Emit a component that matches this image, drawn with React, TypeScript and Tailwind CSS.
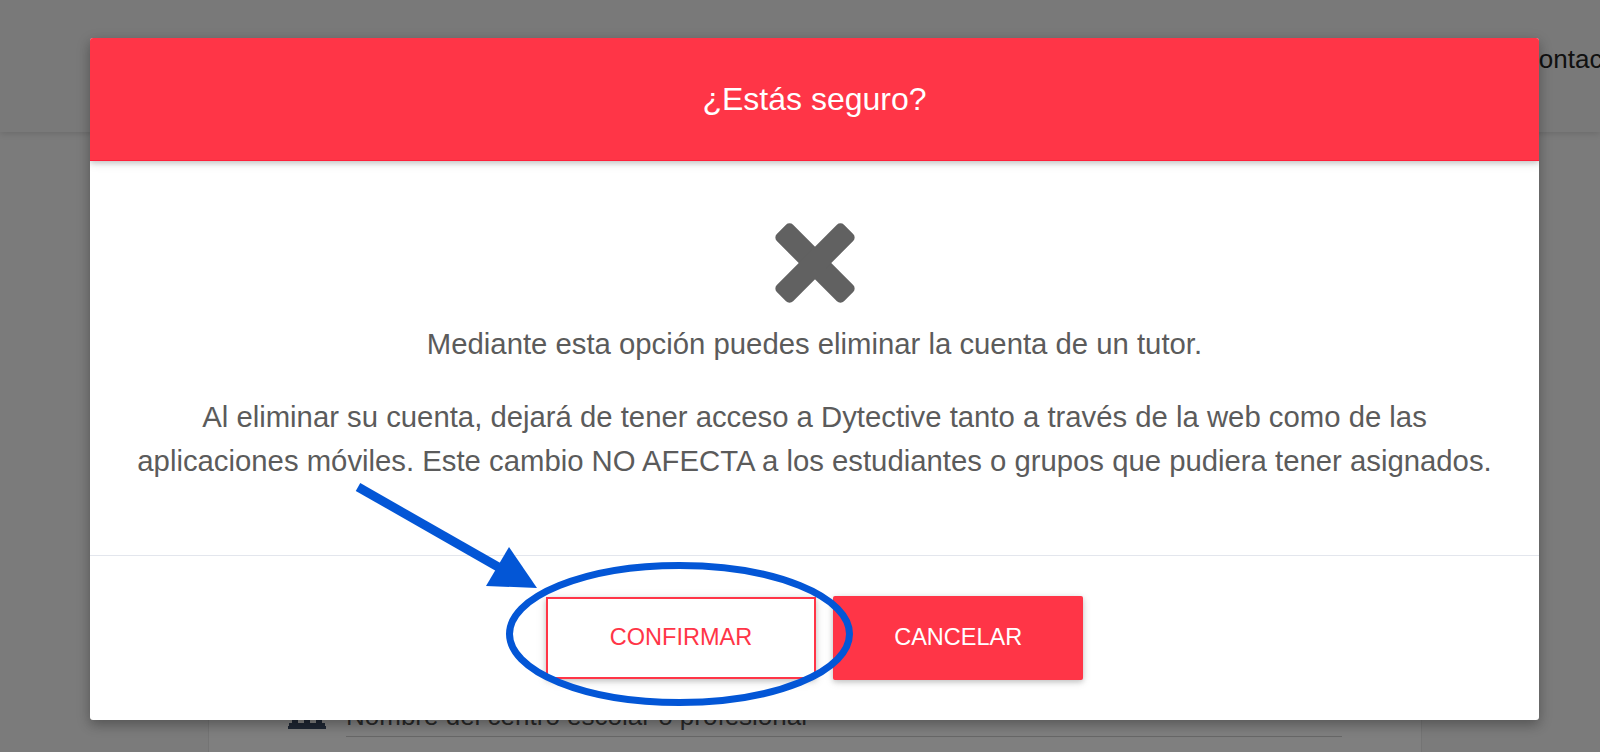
import React from "react";

function XIcon() {
  return (
    <svg width="82" height="80" viewBox="0 0 82 80" className="block">
      <g fill="#616161">
        <rect x={41 - 47.5} y={40 - 11.5} width={95} height={23} rx={5} transform="rotate(45 41 40)" />
        <rect x={41 - 47.5} y={40 - 11.5} width={95} height={23} rx={5} transform="rotate(-45 41 40)" />
      </g>
    </svg>
  );
}

function UniversityIcon() {
  return (
    <svg width="38" height="38" viewBox="0 0 38 38" className="block">
      <g fill="#3d4d66">
        <polygon points="19,0 38,9 38,12 0,12 0,9" />
        <rect x="2" y="13" width="34" height="3" />
        <rect x="4" y="17" width="6" height="15" />
        <rect x="16" y="17" width="6" height="15" />
        <rect x="28" y="17" width="6" height="15" />
        <rect x="1" y="32" width="36" height="3" />
        <rect x="0" y="35" width="38" height="3" />
      </g>
    </svg>
  );
}

export default function App() {
  return (
    <div className="relative w-[1600px] h-[752px] overflow-hidden bg-[#f6f6f6] font-[family-name:'Liberation_Sans',Arial,sans-serif]">
      {/* Underlying page */}
      <nav className="h-[132px] bg-[#f2f2f2] shadow-[0_2px_6px_rgba(0,0,0,0.12)] relative z-[1]">
        <div className="ml-[1520px] pt-[46px] whitespace-nowrap text-[26px] leading-none text-[#222]">
          Contacto
        </div>
      </nav>
      <main>
        <div className="ml-[208px] w-[1214px] mt-[20px] h-[700px] bg-white border-x border-[#e8e8e8] pt-[539px]">
          <div className="flex">
            <div className="ml-[79px]">
              <UniversityIcon />
            </div>
            <div className="ml-[20px] w-[996px] pt-[12px] pb-[7px] border-b border-[#cfcfcf] text-[26px] leading-none text-[#555]">
              Nombre del centro escolar o profesional
            </div>
          </div>
        </div>
      </main>

      {/* Modal overlay */}
      <div className="absolute inset-0 bg-black/50 z-10">
        <div className="pl-[90px] pt-[38px]">
          <div className="w-[1449px] h-[682px] bg-white rounded-[3px] overflow-hidden flex flex-col shadow-[0_5px_11px_0_rgba(0,0,0,0.18),0_4px_15px_0_rgba(0,0,0,0.15)]">
            <div className="relative z-10 h-[123px] shrink-0 bg-[#ff3547] border-b border-[#ff1f3a] flex items-center justify-center text-white text-[32px] leading-none shadow-[0_2px_5px_0_rgba(0,0,0,0.16),0_2px_10px_0_rgba(0,0,0,0.12)]">
              ¿Estás seguro?
            </div>
            <div className="h-[394px] shrink-0 flex flex-col items-center pt-[62px] px-[20px] text-center text-[#5b5b5b] text-[29.3px] leading-[43.5px]">
              <XIcon />
              <p className="mt-[19px]">Mediante esta opción puedes eliminar la cuenta de un tutor.</p>
              <p className="mt-[29.5px] whitespace-nowrap">
                Al eliminar su cuenta, dejará de tener acceso a Dytective tanto a través de la web como de las
                <br />
                aplicaciones móviles. Este cambio NO AFECTA a los estudiantes o grupos que pudiera tener asignados.
              </p>
            </div>
            <div className="flex-1 border-t border-[#e3e6ed] flex items-center justify-center gap-[17px]">
              <button className="h-[82px] px-[62px] bg-white border-2 border-[#ff3547] text-[#ff3547] text-[23.5px] leading-none shadow-[0_2px_5px_0_rgba(0,0,0,0.16),0_2px_10px_0_rgba(0,0,0,0.12)]">
                CONFIRMAR
              </button>
              <button className="h-[84px] px-[61px] bg-[#ff3547] rounded-[2px] text-white text-[23.5px] leading-none shadow-[0_2px_5px_0_rgba(0,0,0,0.16),0_2px_10px_0_rgba(0,0,0,0.12)]">
                CANCELAR
              </button>
            </div>
          </div>
        </div>
      </div>

      {/* Annotation */}
      <svg className="absolute inset-0 z-20 pointer-events-none" width="1600" height="752" viewBox="0 0 1600 752">
        <line x1="358" y1="487" x2="500" y2="568" stroke="#0356d6" strokeWidth="9" />
        <polygon points="537,588 509,547 486,586" fill="#0356d6" />
        <ellipse cx="679.5" cy="634" rx="170" ry="68.5" fill="none" stroke="#0356d6" strokeWidth="7" />
      </svg>
    </div>
  );
}
